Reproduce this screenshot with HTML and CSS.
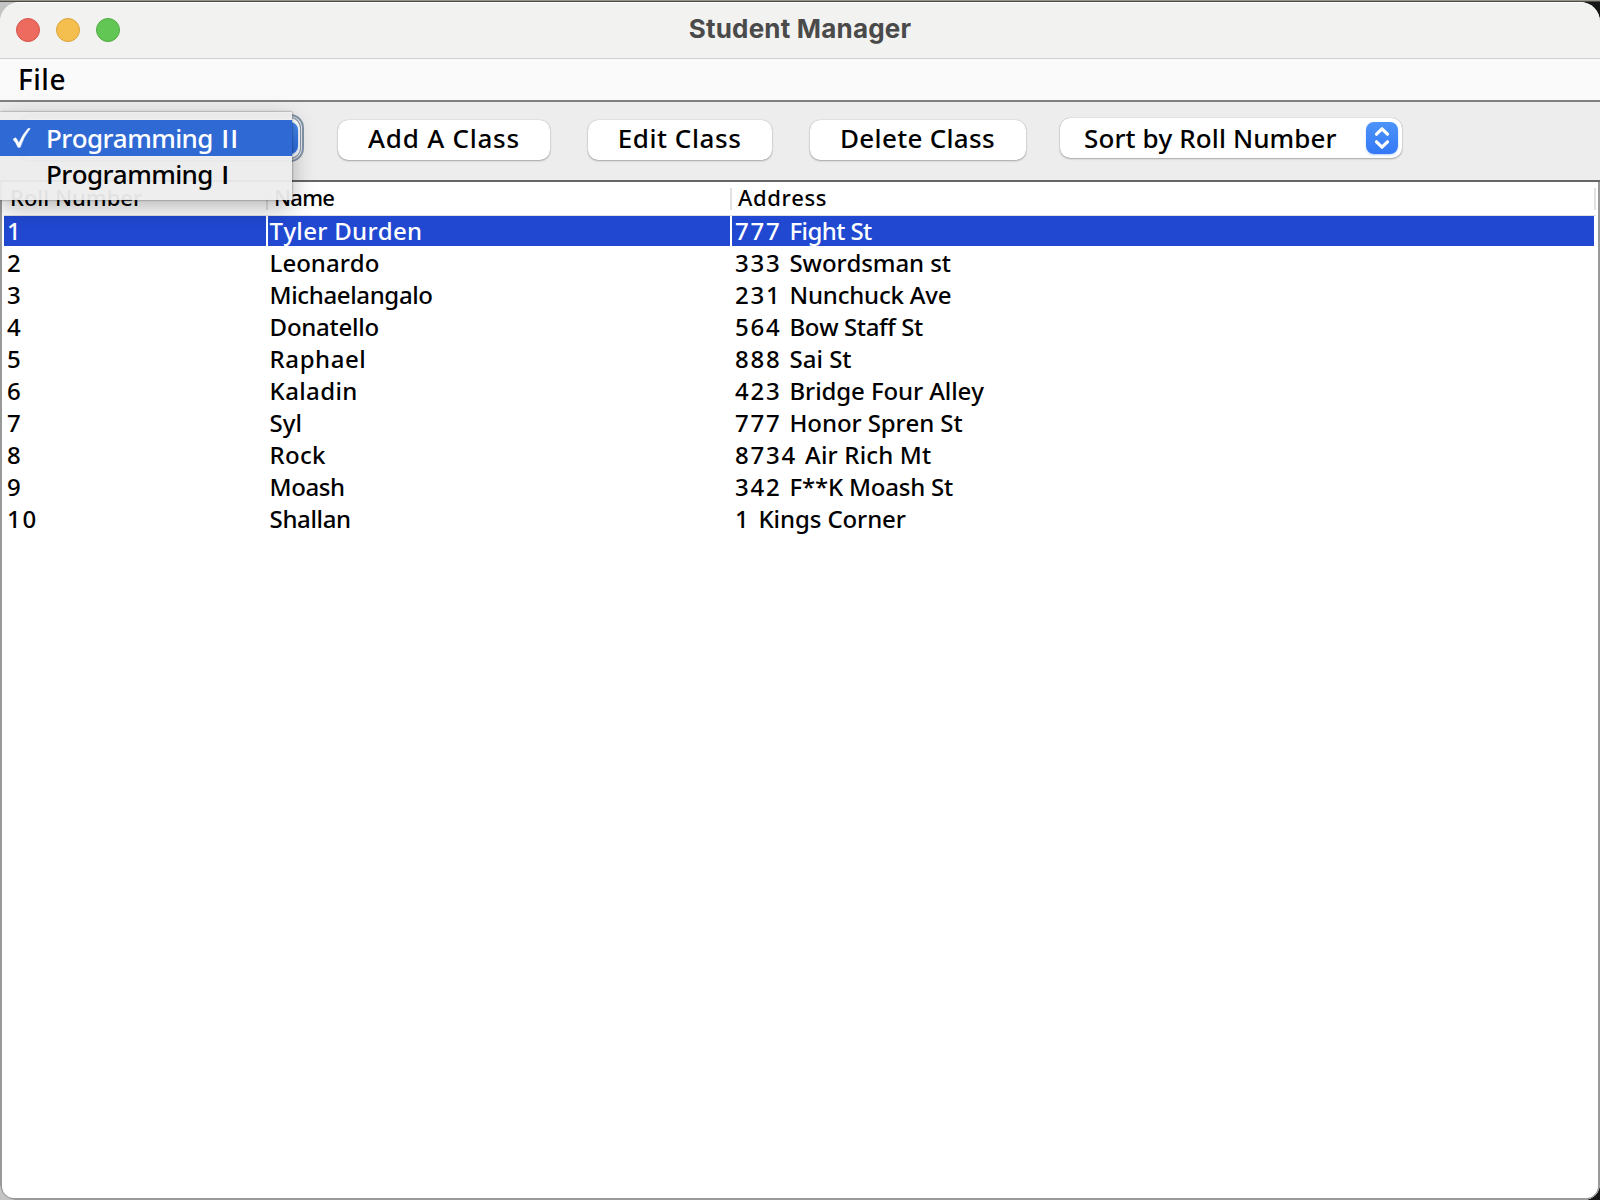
FILE: index.html
```html
<!DOCTYPE html>
<html lang="en">
<head>
<meta charset="utf-8">
<title>Student Manager</title>
<link rel="stylesheet" href="styles.css">
</head>
<body>
<div class="desktop">
  <main class="window">
    <header class="titlebar">
      <div class="lights">
        <span class="light close"></span>
        <span class="light minimize"></span>
        <span class="light maximize"></span>
      </div>
      <h1 class="title">Student Manager</h1>
    </header>
    <nav class="menubar"><span class="menu-item">File</span></nav>
    <section class="toolbar">
      <div class="class-picker">
        <div class="combo focused">
          <span class="combo-arrows">
            <svg viewBox="0 0 32 32"><path d="M10.500 12.200 16 6.800l5.500 5.400M10.500 19.800 16 25.200l5.500-5.400"/></svg>
          </span>
        </div>
        <ul class="popup">
          <li class="option selected">
            <svg class="check" viewBox="0 0 18 20"><path d="M0 11.200 2.700 9.800Q4.600 12.200 5.900 15 9.600 6.500 15 .6L17.200.6Q10.500 8.600 7.200 19.300H5Q3.200 14.600 0 11.200Z"/></svg>
            <span class="label">Programming <span class="numeral">II</span></span>
          </li>
          <li class="option"><span class="label">Programming <span class="numeral">I</span></span></li>
        </ul>
      </div>
      <button class="button add">Add A Class</button>
      <button class="button edit">Edit Class</button>
      <button class="button delete">Delete Class</button>
      <div class="combo sort">
        <span>Sort by Roll Number</span>
        <span class="combo-arrows">
          <svg viewBox="0 0 32 32"><path d="M10.500 12.200 16 6.800l5.500 5.400M10.500 19.800 16 25.200l5.500-5.400"/></svg>
        </span>
      </div>
    </section>
    <section class="table">
      <div class="head">
        <div class="col"><span>Roll Number</span></div>
        <div class="col"><span class="t-n7">Name</span></div>
        <div class="col"><span class="t-6">Address</span></div>
      </div>
      <div class="row active"><span>1</span><span class="t-3">Tyler Durden</span><span class="t-n6"><b>777 </b>Fight St</span></div>
      <div class="row"><span>2</span><span>Leonardo</span><span class="t-n1"><b>333 </b>Swordsman st</span></div>
      <div class="row"><span>3</span><span class="t-n35">Michaelangalo</span><span class="t-n15"><b>231 </b>Nunchuck Ave</span></div>
      <div class="row"><span>4</span><span class="t-n25">Donatello</span><span class="t-n35"><b>564 </b>Bow Staff St</span></div>
      <div class="row"><span>5</span><span class="t-6">Raphael</span><span><b>888 </b>Sai St</span></div>
      <div class="row"><span>6</span><span class="t-4">Kaladin</span><span class="t-n1"><b>423 </b>Bridge Four Alley</span></div>
      <div class="row"><span>7</span><span>Syl</span><span class="t-n1"><b>777 </b>Honor Spren St</span></div>
      <div class="row"><span>8</span><span class="t-3">Rock</span><span class="t-15"><b>8734 </b>Air Rich Mt</span></div>
      <div class="row"><span>9</span><span class="t-n4">Moash</span><span class="t-n15"><b>342 </b>F**K Moash St</span></div>
      <div class="row"><span><b>10</b></span><span class="t-n35">Shallan</span><span class="t-n1"><b>1 </b>Kings Corner</span></div>
    </section>
  </main>
</div>
</body>
</html>
```
FILE: styles.css
```css
* { box-sizing: border-box; }

body {
  margin: 0;
  font-family: "Noto Sans", "Open Sans", sans-serif;
  font-weight: 500;
  font-kerning: none;
  color: #000;
}

.desktop {
  height: 1200px;
  padding-top: 2px;
  overflow: hidden;
  background: linear-gradient(#96948a 0 1px, #4c4b45 1px 2px, transparent 2px),
    linear-gradient(90deg, #c4c4c4 50%, #161616 50%);
}

.window {
  display: flex;
  flex-direction: column;
  height: 1198px;
  overflow: hidden;
  border-radius: 20px 20px 16px 16px;
  background: #ededed;
}

/* Title bar */
.titlebar {
  display: grid;
  grid-template-columns: 1fr auto 1fr;
  align-items: center;
  height: 57px;
  padding: 0 16px;
  border-bottom: 1px solid #d0d0ce;
  background: #f2f2f0;
  box-shadow: inset 0 1px #fff;
}

.lights { display: flex; gap: 16px; }

.light {
  width: 24px;
  height: 24px;
  border: 1px solid;
  border-radius: 50%;
}

.close { background: #ed6a5f; border-color: #d5544a; }
.minimize { background: #f5bf4f; border-color: #d9a33c; }
.maximize { background: #62c655; border-color: #4fab41; }

.title {
  margin: 0;
  padding-bottom: 2px;
  font: 700 26px/32px Inter, sans-serif;
  letter-spacing: .2px;
  color: #4a4a4a;
}

/* Menu bar */
.menubar {
  height: 43px;
  padding-left: 18px;
  border-bottom: 2px solid #808080;
  background: #fafafa;
  font-size: 28px;
  line-height: 40px;
  letter-spacing: .5px;
}

/* Toolbar */
.toolbar {
  display: flex;
  align-items: flex-start;
  height: 80px;
  padding-top: 16px;
  border-bottom: 2px solid #666;
  font-size: 26px;
}

.class-picker { position: relative; padding-left: 20px; }

.combo {
  display: flex;
  align-items: center;
  justify-content: space-between;
  height: 40px;
  padding: 0 4px;
  border-radius: 10px;
  background: #fff;
  box-shadow: 0 0 1px rgba(0, 0, 0, .35), 0 1px 2px rgba(0, 0, 0, .28);
}

.combo.focused {
  justify-content: flex-end;
  width: 280px;
  padding: 0 2px;
  box-shadow: 0 0 0 1px #8494a8, 0 0 0 2px #e8ebef, 0 0 0 4px #8494a8;
}

.combo-arrows {
  width: 32px;
  height: 32px;
  border-radius: 8px;
  background: linear-gradient(#4d94f8, #3478f6);
  box-shadow: 0 1px 2px rgba(52, 120, 246, .35);
}

.focused .combo-arrows { background: linear-gradient(#4488ee, #2c6ce2); }

.combo-arrows svg {
  display: block;
  fill: none;
  stroke: #fff;
  stroke-width: 3.2;
  stroke-linecap: round;
  stroke-linejoin: round;
}

.focused .combo-arrows svg { stroke: #0a2f8a; }

.popup {
  position: absolute;
  top: -6px;
  left: 0;
  z-index: 2;
  width: 292px;
  height: 88px;
  margin: 0;
  padding: 8px 0;
  list-style: none;
  background: rgba(237, 237, 237, .95);
  box-shadow: 0 0 2px rgba(0, 0, 0, .5), 0 8px 22px rgba(0, 0, 0, .28);
}

.option {
  display: flex;
  align-items: center;
  height: 36px;
  padding-left: 46px;
  line-height: 35px;
}

/* The popup's own grey backs this fill, so the blue stays nearly opaque */
.option.selected {
  padding-left: 13px;
  background: rgba(43, 102, 211, .98);
  color: #fff;
}

.check {
  width: 18px;
  height: 20px;
  margin-right: 15px;
  fill: #fff;
  stroke: #fff;
  stroke-width: .6;
}

.label { letter-spacing: -.6px; }

.numeral {
  margin-left: 2.2px;
  font-family: "Open Sans", sans-serif;
  font-weight: 600;
  line-height: 1;
  letter-spacing: 1.2px;
}

.button {
  height: 40px;
  margin: 2px 38px 0 0;
  padding: 0 0 4px;
  border: 0;
  border-radius: 10px;
  background: #fff;
  box-shadow: 0 0 1px rgba(0, 0, 0, .35), 0 1px 2px rgba(0, 0, 0, .28);
  color: #000;
  font: inherit;
  font-size: 26px;
  line-height: 36px;
}

.add { width: 212px; margin-left: 38px; letter-spacing: .76px; }
.edit { width: 184px; padding-right: 1px; letter-spacing: .57px; }
.delete { width: 216px; margin-right: 34px; padding-right: 1px; letter-spacing: .31px; }

.sort {
  width: 342px;
  padding-left: 24px;
  line-height: 40px;
  letter-spacing: .1px;
}

/* Table */
.table {
  flex: 1;
  padding: 0 2px;
  border: solid #999;
  border-width: 0 2px 2px;
  border-radius: 0 0 14px 14px;
  background: #fff;
  font-size: 24px;
}

.head, .row {
  display: grid;
  grid-template-columns: 262px 462px 862px;
  column-gap: 2px;
}

.head {
  width: 1592px;
  height: 34px;
  border-bottom: 1px solid #e0e0e0;
  font-size: 22px;
  line-height: 31px;
}

.col {
  position: relative;
  padding-left: 6px;
}

.col::after {
  content: "";
  position: absolute;
  top: 6px;
  right: -2px;
  width: 2px;
  height: 22px;
  background: #e2e2e2;
}

.row { height: 32px; line-height: 30px; }

.row > span {
  height: 30px;
  padding-left: 1.6px;
  white-space: pre;
}

.row > span:first-child, .row > span:last-child { padding-left: 3px; }
.row.active > span { background: #2048d1; color: #fff; }
.row b { font-weight: inherit; letter-spacing: 1.77px; }

.t-n7 { letter-spacing: -.75px; }
.t-n6 { letter-spacing: -.6px; }
.t-n4 { letter-spacing: -.4px; }
.t-n35 { letter-spacing: -.37px; }
.t-n25 { letter-spacing: -.26px; }
.t-n15 { letter-spacing: -.2px; }
.t-n1 { letter-spacing: -.1px; }
.t-15 { letter-spacing: .17px; }
.t-3 { letter-spacing: .3px; }
.t-4 { letter-spacing: .38px; }
.t-6 { letter-spacing: .57px; }
```
